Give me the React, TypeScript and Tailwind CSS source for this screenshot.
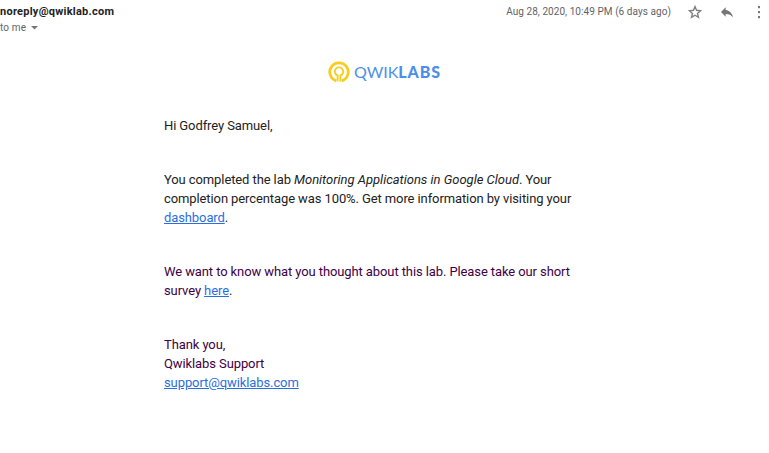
export default function App() {
  return (
    <div className="h-[453px] w-[769px] overflow-hidden bg-white font-['Roboto',sans-serif] text-[#222222]">
      <header className="flex h-[40px] items-start justify-between">
        <div className="pt-[4px]">
          <div className="text-[11px] leading-[16px] font-bold tracking-[0.25px]">noreply@qwiklab.com</div>
          <div className="flex items-center gap-[5px] text-[10px] leading-[16px] tracking-[0.15px] text-[#5f6368]">
            <span>to me</span>
            <svg width="7" height="4" viewBox="0 0 7 4"><path d="M0 0h7L3.500 3.500z" fill="#777" /></svg>
          </div>
        </div>
        <div className="flex items-center pt-[4px] text-[10px] leading-[16px] text-[#5f6368]">
          <span className="tracking-[0.06px]">Aug 28, 2020, 10:49 PM (6 days ago)</span>
          <svg className="ml-[16px]" width="16" height="16" viewBox="0 0 16 16" fill="none" stroke="#808080" strokeWidth="1.400"><path d="M8 2.600l1.550 3.700 4 .4-3.050 2.700.950 3.900L8 11.250l-3.450 2.050.950-3.900-3.050-2.700 4-.4z" /></svg>
          <svg className="ml-[16px]" width="16" height="16" viewBox="0 0 24 24" fill="#777"><path d="M10 9V5l-7 7 7 7v-4.100c5 0 8.500 1.600 11 5.100-1-5-4-10-11-11z" /></svg>
          <svg className="ml-[16px] mr-[2px]" width="16" height="16" viewBox="0 0 16 16" fill="#777"><rect x="7" y="2" width="2" height="2.200" /><rect x="7" y="7" width="2" height="2.200" /><rect x="7" y="12" width="2" height="2.200" /></svg>
        </div>
      </header>
      <div className="ml-[328px] mt-[20px] flex h-[24px] items-center">
        <svg width="22" height="22" viewBox="0 0 22 22" fill="none" stroke="#f6cd1c"><path d="M8.200 19.800A9.200 9.200 0 1 1 13.800 19.800" strokeWidth="2.800" /><path d="M9.600 20.500V14.500A4.200 4.200 0 1 1 12.400 14.500V20.500" strokeWidth="1.900" /></svg>
        <span className="ml-[4px] flex font-['Lato',sans-serif] text-[16px] leading-[24px] text-[#4b90e8]"><span>QWIK</span><b className="font-black tracking-[0.9px]">LABS</b></span>
      </div>
      <main className="ml-[164px] mt-[32px] w-[430px] text-[13px] leading-[19px] tracking-[-0.1px]">
        <p>Hi Godfrey Samuel,</p>
        <p className="mt-[35px]">You completed the lab <i className="tracking-[-0.02px]">Monitoring Applications in Google Cloud</i>. Your<br />completion percentage was 100%. Get more information by visiting your<br /><a className="text-[#2a6fe0] underline">dashboard</a>.</p>
        <p className="mt-[35px] text-[#400045]">We want to know what you thought about this lab. Please take our short<br />survey <a className="text-[#2a6fe0] underline">here</a>.</p>
        <p className="mt-[35px] text-[#400045]">Thank you,<br />Qwiklabs Support<br /><a className="text-[#2a6fe0] underline">support@qwiklabs.com</a></p>
      </main>
    </div>
  );
}
